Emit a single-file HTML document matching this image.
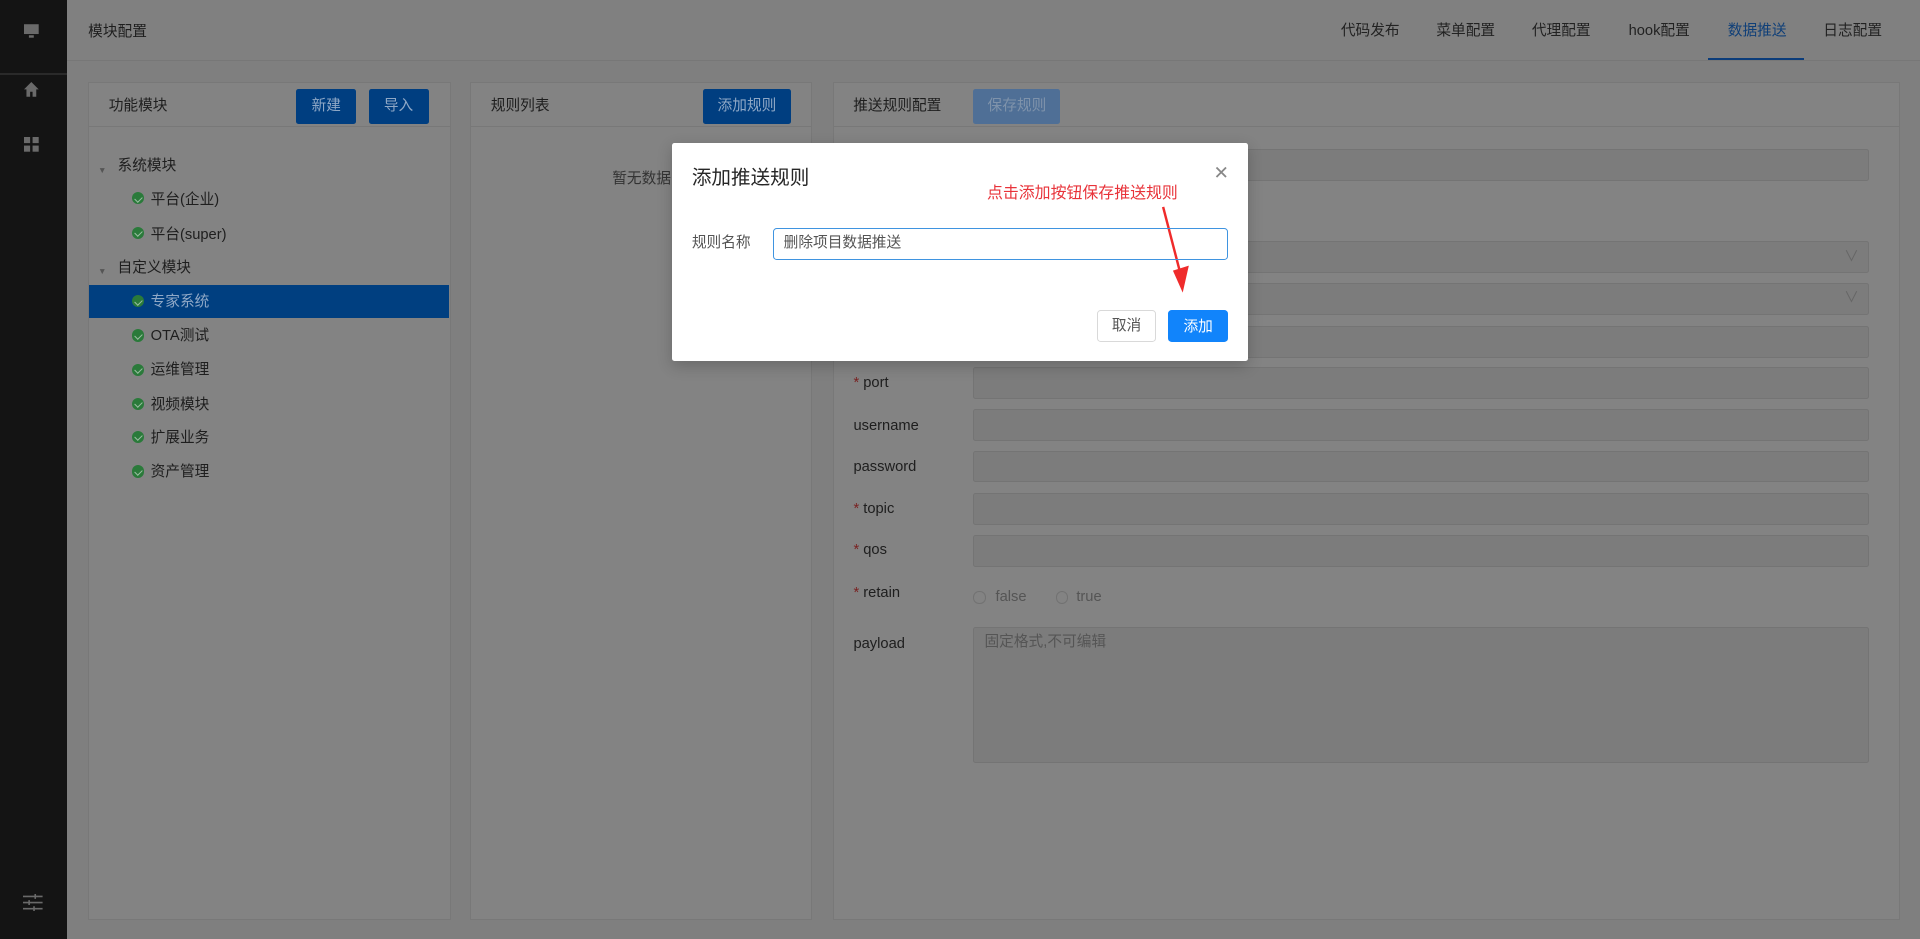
<!DOCTYPE html>
<html><head><meta charset="utf-8"><style>
*{box-sizing:border-box;margin:0;padding:0}
html,body{width:1920px;height:939px;overflow:hidden;background:#7f7f7f}
#r{width:1568px;height:767px;position:relative;zoom:1.22449;font-family:"Liberation Sans","Noto Sans CJK SC",sans-serif;font-size:12px;line-height:14px;color:#1e1e1e;background:#7f7f7f}
.a{position:absolute}
.side{left:0;top:0;width:55px;height:767px;background:#141414}
.top{left:55px;top:0;right:0;height:50px;background:#808080;border-bottom:1px solid #777}
.tab{top:19px;font-size:12px;color:#222}
.panel{background:#838383;border:1px solid #787878}
.ph{height:36px;border-bottom:1px solid #787878;position:relative}
.btn{background:#003e80;color:#8fa8c6;border-radius:2px;text-align:center;line-height:28px;font-size:12px}
.item{font-size:12px;color:#1e1e1e}
.chk{width:10px;height:10px;border-radius:50%;background:#2a7a3a}
.chk:after{content:"";position:absolute;left:3px;top:2px;width:3px;height:5px;border:solid #9bbfa2;border-width:0 1px 1px 0;transform:rotate(45deg)}
.inp{left:795px;width:731px;height:26px;background:#7c7c7c;border:1px solid #747474;border-radius:2px}
.lbl{left:697px;color:#1e1e1e}
.lbl b{color:#7a2222;font-weight:normal}
</style></head><body><div id="r">
<div class="a side"></div>
<div class="a" style="left:0;top:60px;width:55px;height:1px;background:#2a2a2a"></div>
<svg class="a" style="left:20px;top:19px" width="13" height="13"><rect x="0" y="1" width="12" height="8" fill="#6a6a6a"/><rect x="4" y="10" width="4" height="2" fill="#6a6a6a"/></svg>
<svg class="a" style="left:20px;top:67px" width="13" height="13"><path d="M6 0L0 6h2v6h3V8h2v4h3V6h2z" fill="#6a6a6a"/></svg>
<svg class="a" style="left:20px;top:112px" width="13" height="13"><rect x="0" y="0" width="5" height="5" fill="#6a6a6a"/><rect x="7" y="0" width="5" height="5" fill="#6a6a6a"/><rect x="0" y="7" width="5" height="5" fill="#6a6a6a"/><rect x="7" y="7" width="5" height="5" fill="#6a6a6a"/></svg>
<svg class="a" style="left:19px;top:730px" width="16" height="14" stroke="#6a6a6a" stroke-width="1.3"><path d="M0 2h16M0 7h16M0 12h16"/><path d="M10 0v4M5 5v4M9 10v4"/></svg>
<div class="a top"></div>
<div class="a" style="left:72px;top:20px;font-size:12px">模块配置</div>
<div class="a tab" style="left:1095px">代码发布</div>
<div class="a tab" style="left:1173px">菜单配置</div>
<div class="a tab" style="left:1251px">代理配置</div>
<div class="a tab" style="left:1330px">hook配置</div>
<div class="a tab" style="left:1411px;color:#0f3f78">数据推送</div>
<div class="a tab" style="left:1489px">日志配置</div>
<div class="a" style="left:1395px;top:47px;width:78px;height:2px;background:#0b3c7a"></div>

<div class="a panel" style="left:72px;top:67px;width:296px;height:684px"><div class="ph"><span class="a" style="left:16px;top:12px">功能模块</span></div></div>
<div class="a btn" style="left:242px;top:73px;width:49px">新建</div>
<div class="a btn" style="left:301px;top:73px;width:49px">导入</div>
<div class="a" style="left:80px;top:132px;font-size:7px;color:#555">▼</div>
<div class="a item" style="left:96px;top:129px">系统模块</div>
<div class="a chk" style="left:108px;top:157px"></div><div class="a item" style="left:123px;top:157px">平台(企业)</div>
<div class="a chk" style="left:108px;top:185px"></div><div class="a item" style="left:123px;top:185px">平台(super)</div>
<div class="a" style="left:80px;top:215px;font-size:7px;color:#555">▼</div>
<div class="a item" style="left:96px;top:212px">自定义模块</div>
<div class="a" style="left:73px;top:233px;width:294px;height:27px;background:#003f80"></div>
<div class="a chk" style="left:108px;top:241px"></div><div class="a item" style="left:123px;top:240px;color:#8fa8c6">专家系统</div>
<div class="a chk" style="left:108px;top:269px"></div><div class="a item" style="left:123px;top:268px">OTA测试</div>
<div class="a chk" style="left:108px;top:297px"></div><div class="a item" style="left:123px;top:296px">运维管理</div>
<div class="a chk" style="left:108px;top:325px"></div><div class="a item" style="left:123px;top:324px">视频模块</div>
<div class="a chk" style="left:108px;top:352px"></div><div class="a item" style="left:123px;top:351px">扩展业务</div>
<div class="a chk" style="left:108px;top:380px"></div><div class="a item" style="left:123px;top:379px">资产管理</div>

<div class="a panel" style="left:384px;top:67px;width:279px;height:684px"><div class="ph"><span class="a" style="left:16px;top:12px">规则列表</span></div></div>
<div class="a btn" style="left:574px;top:73px;width:72px">添加规则</div>
<div class="a" style="left:500px;top:140px;color:#333">暂无数据</div>

<div class="a panel" style="left:680px;top:67px;width:872px;height:684px"><div class="ph"><span class="a" style="left:16px;top:12px">推送规则配置</span></div></div>
<div class="a btn" style="left:795px;top:73px;width:71px;background:#4f6f96;color:#7f93ab">保存规则</div>
<div class="a inp" style="top:122px"></div>
<div class="a inp" style="top:197px"></div><div class="a" style="left:1506px;top:203px;color:#666">∨</div>
<div class="a inp" style="top:231px"></div><div class="a" style="left:1506px;top:237px;color:#666">∨</div>
<div class="a inp" style="top:266px"></div>
<div class="a inp" style="top:300px"></div><div class="a lbl" style="top:306px"><b>*</b> port</div>
<div class="a inp" style="top:334px"></div><div class="a lbl" style="top:341px">username</div>
<div class="a inp" style="top:368px"></div><div class="a lbl" style="top:375px">password</div>
<div class="a inp" style="top:403px"></div><div class="a lbl" style="top:409px"><b>*</b> topic</div>
<div class="a inp" style="top:437px"></div><div class="a lbl" style="top:443px"><b>*</b> qos</div>
<div class="a lbl" style="top:478px"><b>*</b> retain</div>
<div class="a" style="left:795px;top:483px;width:10px;height:10px;border-radius:50%;border:1px solid #727272"></div><div class="a" style="left:813px;top:481px;color:#555">false</div>
<div class="a" style="left:862px;top:483px;width:10px;height:10px;border-radius:50%;border:1px solid #727272"></div><div class="a" style="left:879px;top:481px;color:#555">true</div>
<div class="a lbl" style="top:519px">payload</div>
<div class="a inp" style="top:512px;height:111px"></div><div class="a" style="left:804px;top:518px;color:#555">固定格式,不可编辑</div>

<div class="a" style="left:549px;top:117px;width:470px;height:178px;background:#fff;border-radius:2px;box-shadow:0 4px 12px rgba(0,0,0,.2)"></div>
<div class="a" style="left:565px;top:136px;font-size:16px;line-height:18px;color:#262626">添加推送规则</div>
<div class="a" style="left:991px;top:134px;font-size:15px;color:#888">✕</div>
<div class="a" style="left:806px;top:151px;font-size:13px;line-height:15px;color:#e8333a">点击添加按钮保存推送规则</div>
<svg class="a" style="left:945px;top:165px" width="30" height="78"><path d="M5 4L19 58" stroke="#ef2b2b" stroke-width="2"/><path d="M13 56L21 74L26 52z" fill="#ef2b2b"/></svg>
<div class="a" style="left:565px;top:192px;color:#555">规则名称</div>
<div class="a" style="left:631px;top:186px;width:372px;height:26px;border:1px solid #3f94e0;border-radius:3px"></div>
<div class="a" style="left:640px;top:192px;color:#555">删除项目数据推送</div>
<div class="a" style="left:896px;top:253px;width:48px;height:26px;border:1px solid #d9d9d9;border-radius:3px;text-align:center;line-height:26px;color:#555">取消</div>
<div class="a" style="left:954px;top:253px;width:49px;height:26px;background:#1184fb;border-radius:3px;text-align:center;line-height:28px;color:#fff">添加</div>
</div></body></html>
